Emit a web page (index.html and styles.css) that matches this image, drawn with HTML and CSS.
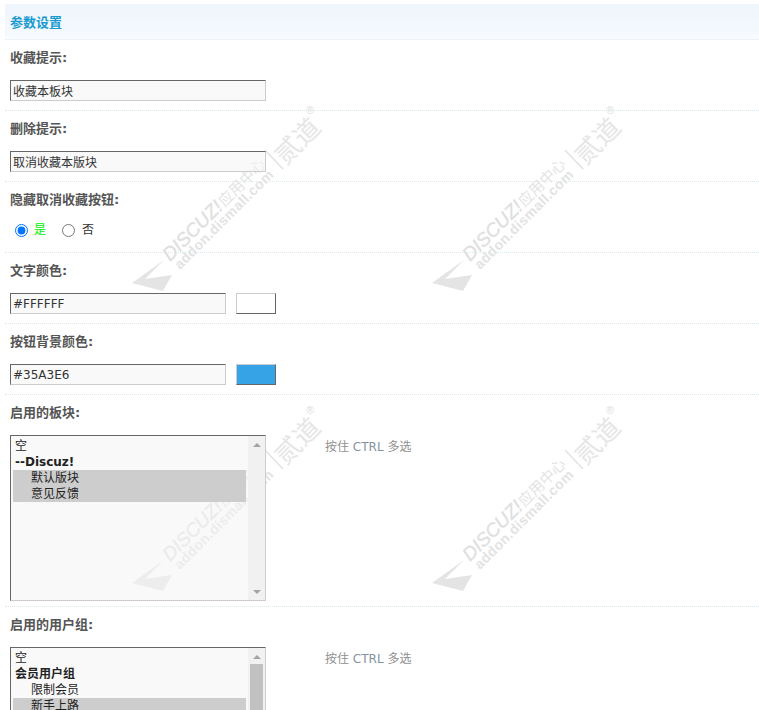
FILE: index.html
```html
<!DOCTYPE html>
<html lang="zh-CN">
<head>
<meta charset="utf-8">
<title>参数设置</title>
<link rel="stylesheet" href="styles.css">
</head>
<body>
<svg class="watermark" width="759" height="710" aria-hidden="true">
  <defs>
    <g id="wm">
      <path class="wm-fill" d="M132 283 L164 260 L145 279 L172 275 L163 291 Z"/>
      <g transform="rotate(-45 170 262)">
        <text class="wm-title" x="170" y="262">DISCUZ!</text>
        <text class="wm-cn" x="247" y="262">应用中心</text>
      </g>
      <g transform="rotate(-45 180 270)">
        <text class="wm-sub" x="180" y="270">addon.dismall.com</text>
      </g>
      <path class="wm-line" d="M265 150 L283 169"/>
      <g transform="rotate(-45 285.5 166)">
        <text class="wm-brand" x="285.5" y="166">贰道</text>
      </g>
      <text class="wm-reg" x="310" y="114">®</text>
    </g>
  </defs>
  <use href="#wm" x="0" y="0"/>
  <use href="#wm" x="300" y="0"/>
  <use href="#wm" x="0" y="300"/>
  <use href="#wm" x="300" y="300"/>
</svg>
<main class="panel">
  <h2 class="panel-title">参数设置</h2>

  <section class="row">
    <label class="row-label">收藏提示:</label>
    <div class="row-body"><input class="field" type="text" value="收藏本板块"></div>
  </section>

  <section class="row">
    <label class="row-label">删除提示:</label>
    <div class="row-body"><input class="field" type="text" value="取消收藏本版块"></div>
  </section>

  <section class="row">
    <label class="row-label">隐藏取消收藏按钮:</label>
    <div class="row-body radios">
      <label class="radio radio-on"><input type="radio" name="hide" checked>是</label>
      <label class="radio"><input type="radio" name="hide">否</label>
    </div>
  </section>

  <section class="row">
    <label class="row-label">文字颜色:</label>
    <div class="row-body">
      <input class="field field-color" type="text" value="#FFFFFF">
      <span class="swatch swatch-white"></span>
    </div>
  </section>

  <section class="row">
    <label class="row-label">按钮背景颜色:</label>
    <div class="row-body">
      <input class="field field-color" type="text" value="#35A3E6">
      <span class="swatch swatch-blue"></span>
    </div>
  </section>

  <section class="row row-list">
    <label class="row-label">启用的板块:</label>
    <div class="row-body list-body">
      <div class="listbox">
        <ul class="list-items">
          <li>空</li>
          <li class="group">--Discuz!</li>
          <li class="child selected">默认版块</li>
          <li class="child selected">意见反馈</li>
        </ul>
        <div class="scrollbar">
          <span class="arrow arrow-up"></span>
          <span class="track"></span>
          <span class="arrow arrow-down"></span>
        </div>
      </div>
      <span class="hint">按住 <span class="hint-key">CTRL</span> 多选</span>
    </div>
  </section>

  <section class="row row-list row-last">
    <label class="row-label">启用的用户组:</label>
    <div class="row-body list-body">
      <div class="listbox">
        <ul class="list-items">
          <li>空</li>
          <li class="group">会员用户组</li>
          <li class="child">限制会员</li>
          <li class="child selected">新手上路</li>
        </ul>
        <div class="scrollbar">
          <span class="arrow arrow-up"></span>
          <span class="track track-thumb"></span>
          <span class="arrow arrow-down"></span>
        </div>
      </div>
      <span class="hint">按住 <span class="hint-key">CTRL</span> 多选</span>
    </div>
  </section>
</main>
</body>
</html>
```
FILE: styles.css
```css
html { overflow: hidden; height: 710px; background: #fff; }
body {
  margin: 0;
  height: 710px;
  overflow: hidden;
  position: relative;
  font: 12px/16px "DejaVu Sans", "Noto Sans CJK SC", sans-serif;
  color: #333;
}
.watermark { position: absolute; left: 0; top: 0; }
.wm-fill { fill: #e4e4e4; }
.wm-title { font: italic 19px "Liberation Sans", sans-serif; fill: #dedede; stroke: #e4e4e4; stroke-width: .4px; }
.wm-cn { font: 15px "Noto Sans CJK SC", sans-serif; fill: #e4e4e4; }
.wm-sub { font: bold 14px "Liberation Sans", sans-serif; fill: #e3e3e3; letter-spacing: .4px; }
.wm-line { stroke: #e2e2e2; stroke-width: 1.5; fill: none; }
.wm-brand { font: 26px "Noto Sans CJK SC", sans-serif; fill: #e6e6e6; }
.wm-reg { font: 11px "Liberation Sans", sans-serif; fill: #e0e0e0; text-anchor: middle; }

.panel { position: relative; padding: 4px 0 0 5px; }
.panel-title {
  margin: 0;
  height: 35px;
  padding-left: 5px;
  font: bold 13px/37px "DejaVu Sans", "Noto Sans CJK SC", sans-serif;
  color: #1a9bd0;
  background: linear-gradient(to bottom, #eff5fc, #f4f9fe 80%, #fafcff);
  border-bottom: 1px dotted #e8f0f5;
}
.row {
  height: 70px;
  padding: 0 0 0 5px;
  border-bottom: 1px dotted #dbe8ee;
  display: flex;
  flex-direction: column;
}
.row-list { height: 211px; }
.row-last { border-bottom: 0; }
.row-label {
  height: 40px;
  font-size: 13px;
  font-weight: bold;
  line-height: 36px;
  color: #555;
  display: block;
}
.row-body { display: flex; align-items: flex-start; }
.field {
  box-sizing: border-box;
  width: 256px;
  height: 21px;
  padding: 0 2px;
  border: 1px solid;
  border-color: #666 #ccc #ccc #666;
  border-radius: 0;
  background: rgba(244, 244, 244, .55);
  font: 12px/19px "DejaVu Sans", "Noto Sans CJK SC", sans-serif;
  color: #333;
  outline: 0;
}
.field-color { width: 216px; }
.swatch {
  box-sizing: border-box;
  width: 40px;
  height: 21px;
  margin-left: 10px;
  border: 1px solid;
  border-color: #ccc #666 #666 #ccc;
}
.swatch-white { background: #fff; }
.swatch-blue { background: #35a3e6; }
.radios { gap: 15px; padding-left: 5px; margin-top: -1px; }
.radio { display: flex; align-items: center; height: 18px; }
.radio input { margin: 0 6px 0 0; width: 13px; height: 13px; }
.radio + .radio input { margin-right: 7px; }
.radio-on { color: #0e0; margin-right: 1px; }
.list-body { gap: 59px; }
.listbox {
  box-sizing: border-box;
  width: 256px;
  height: 166px;
  display: flex;
  border: 1px solid;
  border-color: #666 #ccc #ccc #666;
  background: rgba(244, 244, 244, .55);
}
.list-items {
  list-style: none;
  margin: 0;
  padding: 2px 0 0 2px;
  flex: 1;
  overflow: hidden;
  color: #222;
}
.list-items li { height: 16px; margin-right: 2px; padding-left: 2px; }
.list-items .group { font-weight: bold; }
.list-items .child { padding-left: 18px; }
.list-items .selected { background: #cdcdcd; }
.scrollbar {
  width: 17px;
  display: flex;
  flex-direction: column;
  align-items: center;
  background: #f1f1f1;
}
.arrow { width: 0; height: 0; border-left: 4px solid transparent; border-right: 4px solid transparent; flex: none; }
.arrow-up { margin: 7px 0 5px; border-bottom: 4px solid #a3a3a3; }
.arrow-down { margin: 5px 0 6px; border-top: 4px solid #a3a3a3; }
.track { flex: 1; width: 13px; }
.track-thumb { background: #c1c1c1; }
.hint { padding-top: 4px; color: #8f8f8f; }
.hint-key { color: #84939f; }
```
